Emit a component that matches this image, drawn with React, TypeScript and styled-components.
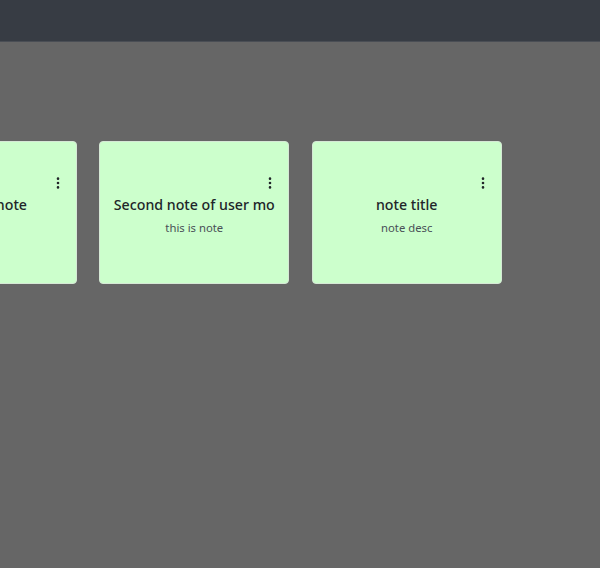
import styled, { createGlobalStyle } from "styled-components";

const GlobalStyle = createGlobalStyle`
  html, body {
    margin: 0;
    padding: 0;
    height: 100%;
    overflow: hidden;
    background-color: #666666;
    font-family: "Noto Sans", "Open Sans", sans-serif;
  }
`;

const Navbar = styled.nav`
  height: 41px;
  background-color: #373c44;
  border-bottom: 1px solid #4a4e55;
`;

const NotesRow = styled.main`
  display: flex;
  gap: 22.4px;
  padding-top: 99.3px;
  margin-left: -113.1px;
`;

const Card = styled.div`
  flex: 0 0 190px;
  min-width: 0;
  height: 143px;
  box-sizing: border-box;
  padding: 34px 11px 0;
  display: flex;
  flex-direction: column;
  background-color: #ccffcc;
  border: 1px solid #d5e8d5;
  border-radius: 4px;
`;

const MenuButton = styled.div`
  align-self: flex-end;
  width: 14px;
  height: 14px;
  color: #212529;

  svg {
    display: block;
  }
`;

const Title = styled.h5`
  margin: 4px 0 0;
  font-size: 14.2px;
  font-weight: 500;
  line-height: 22px;
  color: #212529;
  text-align: center;
  white-space: nowrap;
`;

const Description = styled.p`
  margin: 3px 0 0;
  font-size: 11.3px;
  line-height: 18px;
  color: #495057;
  text-align: center;
`;

const DotsIcon = () => (
  <svg width="14" height="14" viewBox="0 0 16 16" fill="currentColor">
    <path d="M9.5 13a1.5 1.5 0 1 1-3 0 1.5 1.5 0 0 1 3 0m0-5a1.5 1.5 0 1 1-3 0 1.5 1.5 0 0 1 3 0m0-5a1.5 1.5 0 1 1-3 0 1.5 1.5 0 0 1 3 0" />
  </svg>
);

const notes = [
  { title: "Another note", description: "" },
  { title: "Second note of user mo", description: "this is note" },
  { title: "note title", description: "note desc" },
];

export default function App() {
  return (
    <>
      <GlobalStyle />
      <Navbar />
      <NotesRow>
        {notes.map((note) => (
          <Card key={note.title}>
            <MenuButton>
              <DotsIcon />
            </MenuButton>
            <Title>{note.title}</Title>
            {note.description && <Description>{note.description}</Description>}
          </Card>
        ))}
      </NotesRow>
    </>
  );
}
